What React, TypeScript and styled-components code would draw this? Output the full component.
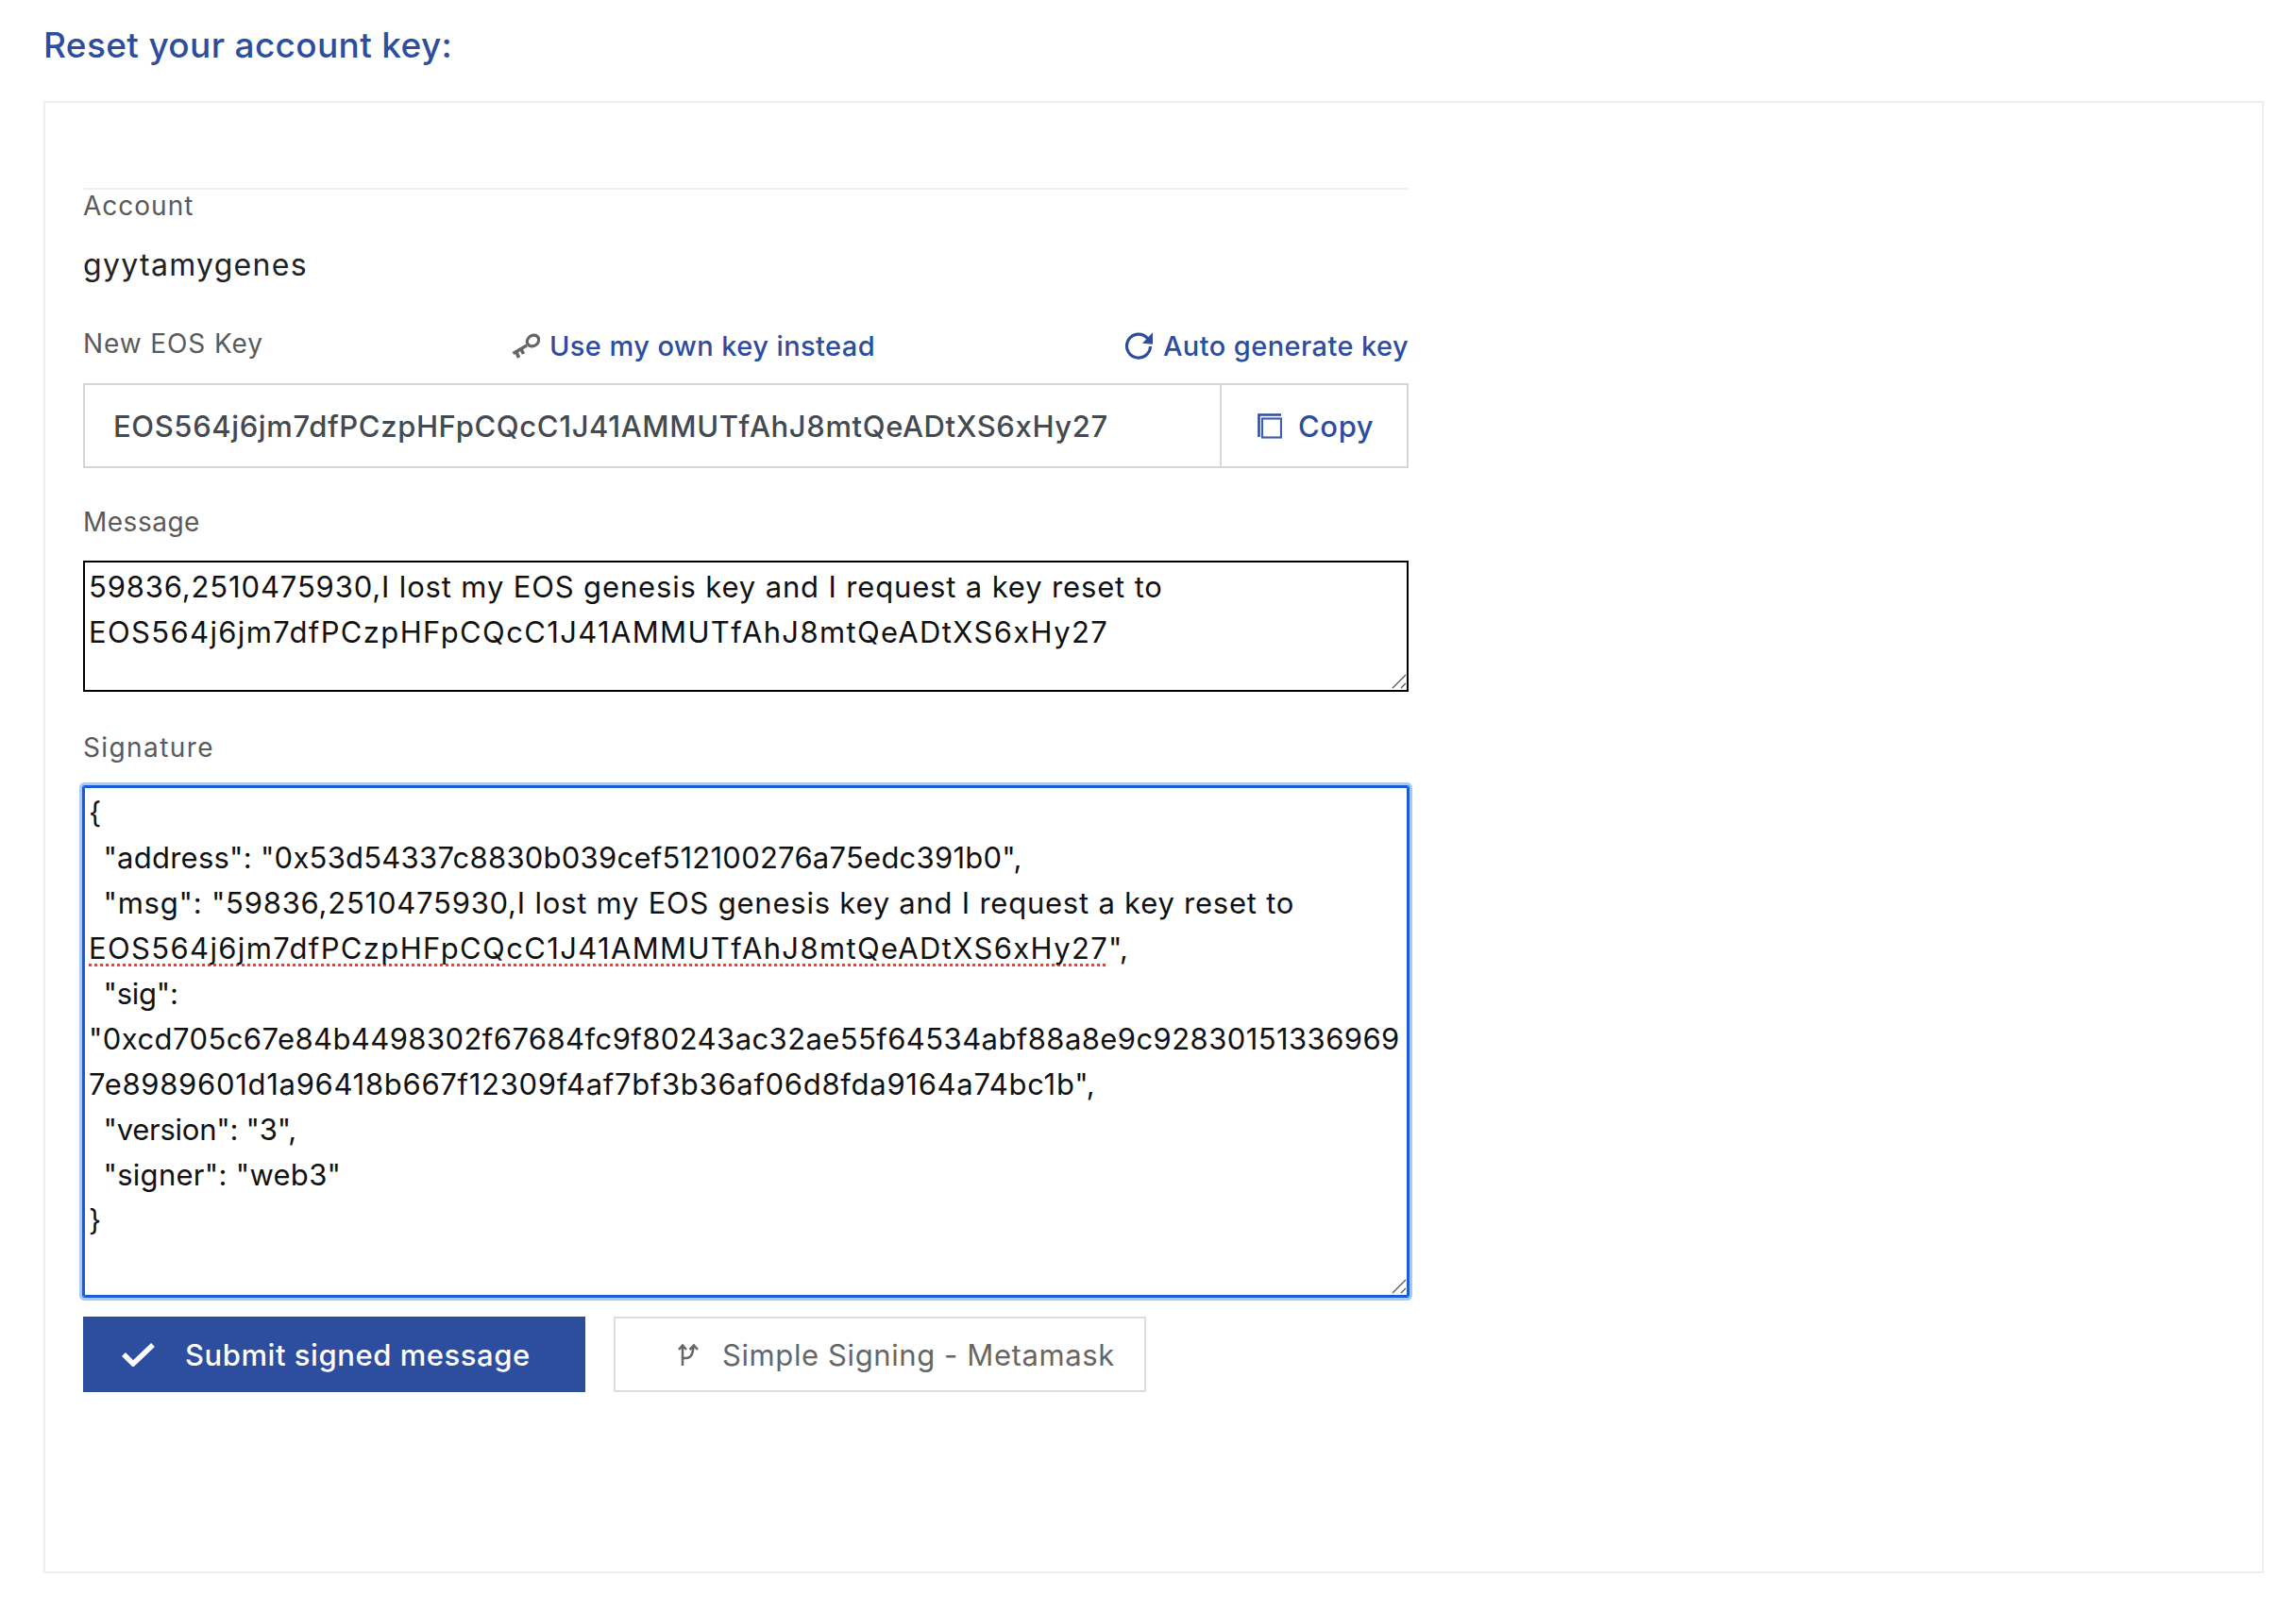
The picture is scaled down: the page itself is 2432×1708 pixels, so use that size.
import React from "react";
import styled, { createGlobalStyle } from "styled-components";

const Global = createGlobalStyle`
    html, body { margin: 0; padding: 0; background: #fff; }
    body { font-family: Inter, "Noto Sans", sans-serif; }
`;

const Page = styled.div`
    width: 2432px;
    height: 1708px;
    padding: 24px 34px 0 46px;
    box-sizing: border-box;
    overflow: hidden;
`;

const Title = styled.h1`
    margin: 0 0 24px;
    height: 59px;
    font-size: 37px;
    line-height: 47px;
    font-weight: 500;
    letter-spacing: 0.35px;
    color: #2d4e9e;
`;

const Card = styled.div`
    height: 1560px;
    box-sizing: border-box;
    border: 2px solid #eeeeee;
    padding: 90px 0 0 40px;
`;

const Form = styled.div`
    width: 1404px;
    border-top: 2px solid #f0f0f0;
`;

const Label = styled.div<{ $spacing?: number }>`
    font-size: 28px;
    line-height: 34px;
    letter-spacing: ${p => p.$spacing ?? 0.5}px;
    color: #5a5a5a;
`;

const AccountName = styled.div`
    margin-top: 24px;
    height: 78px;
    font-size: 32px;
    line-height: 44px;
    letter-spacing: 1.3px;
    color: #222;
`;

const KeyRow = styled.div`
    display: flex;
    align-items: center;
    height: 54px;
    margin-bottom: 15px;
`;

const LinkGroup = styled.a<{ $left: string }>`
    display: flex;
    align-items: center;
    gap: 10px;
    margin-left: ${p => p.$left};
    padding-top: 5px;
    font-size: 29px;
    letter-spacing: 0.42px;
    font-weight: 500;
    color: #2d4e9e;
`;

const KeyField = styled.div`
    display: flex;
    height: 90px;
    box-sizing: border-box;
    border: 2px solid #d5d5d5;
`;

const KeyValue = styled.div`
    flex: 1;
    display: flex;
    align-items: center;
    padding-left: 30px;
    font-size: 31px;
    letter-spacing: 0.62px;
    font-weight: 500;
    color: #454a50;
`;

const CopyButton = styled.div`
    width: 198px;
    box-sizing: border-box;
    border-left: 2px solid #d5d9e0;
    display: flex;
    align-items: center;
    gap: 17px;
    padding-left: 38px;
    font-size: 31px;
    font-weight: 500;
    letter-spacing: 0.6px;
    color: #2d4e9e;
`;

const FieldLabel = styled(Label) <{ $top: number }>`
    margin-top: ${p => p.$top}px;
    margin-bottom: 24px;
`;

const TextBox = styled.div<{ $height: number; $focus?: boolean }>`
    position: relative;
    height: ${p => p.$height}px;
    box-sizing: border-box;
    border: 2px solid ${p => (p.$focus ? "#1a5bd6" : "#000")};
    ${p => p.$focus && "border-radius: 2px; box-shadow: 0 0 0 1px #1a5bd6, 0 0 0 4px #a9c9f7;"}
    padding: 2px 0 0 4px;
    font-size: 31px;
    line-height: 48px;
    color: #111;
`;

const Line = styled.div<{ $spacing: number }>`
    white-space: pre;
    height: 48px;
    letter-spacing: ${p => p.$spacing}px;
`;

const Indent = styled.span`
    letter-spacing: -1px;
`;

const Misspelled = styled.span`
    text-decoration: underline dotted #e8403c 3px;
    text-decoration-skip-ink: none;
    text-underline-offset: 5px;
`;

const Trail = styled.span`
    letter-spacing: 0;
`;

const Grip = styled.svg`
    position: absolute;
    right: 0;
    bottom: 1px;
`;

const Actions = styled.div`
    display: flex;
    gap: 30px;
    margin-top: 21px;
`;

const PrimaryButton = styled.div`
    width: 532px;
    height: 80px;
    box-sizing: border-box;
    padding-left: 41px;
    display: flex;
    align-items: center;
    gap: 32px;
    background: #2d4e9e;
    color: #fff;
    font-size: 31px;
    letter-spacing: 0.55px;
    font-weight: 500;
`;

const SecondaryButton = styled.div`
    width: 564px;
    height: 80px;
    box-sizing: border-box;
    border: 2px solid #dedede;
    padding-left: 66px;
    display: flex;
    align-items: center;
    gap: 25px;
    color: #666;
    font-size: 31px;
    letter-spacing: 0.6px;
`;

const KEY = "EOS564j6jm7dfPCzpHFpCQcC1J41AMMUTfAhJ8mtQeADtXS6xHy27";

const KeyIcon = () => (
    <svg width="30" height="27" viewBox="0 0 30 27" fill="none" stroke="#666" strokeWidth="3.2">
        <ellipse cx="22.5" cy="8" rx="6.5" ry="5.5" transform="rotate(-35 22.5 8)" />
        <path d="M16 13 L1.5 21.5" />
        <path d="M5 20 L7.5 26 M10 17 L12.5 22" strokeWidth="3.6" />
    </svg>
);

const RefreshIcon = () => (
    <svg width="30" height="29" viewBox="0 0 30 29" fill="none">
        <path d="M23.5 6.5 A12.5 12.5 0 1 0 26.5 15" stroke="#2d4e9e" strokeWidth="3.2" />
        <path d="M29 0.3 V12.7 L18 11.7 Z" fill="#2d4e9e" />
    </svg>
);

const CopyIcon = () => (
    <svg width="26" height="27" viewBox="0 0 26 27" fill="none">
        <path d="M1.5 25 V1.5 H25" stroke="#2d4e9e" strokeWidth="2.6" />
        <rect x="5" y="5.5" width="20" height="20" stroke="#3f60ad" strokeWidth="2.2" />
    </svg>
);

const CheckIcon = () => (
    <svg width="35" height="26" viewBox="0 0 35 26" fill="none">
        <path d="M2 13 L12 23 L33 3" stroke="#fff" strokeWidth="5.5" />
    </svg>
);

const BranchIcon = () => (
    <svg width="22" height="23" viewBox="0 0 22 23" fill="none" stroke="#666" strokeWidth="2.5">
        <path d="M5 23 V2 M1 6 L5 1.5 L9 6" />
        <path d="M5 15 H9 Q16 15 16.5 2 M12.5 6 L17 1.5 L21 6" />
    </svg>
);

const GripIcon = () => (
    <Grip width="16" height="16" viewBox="0 0 16 16" stroke="#555" strokeWidth="1.2">
        <path d="M1 15 L15 1 M10 15 L15 10" />
    </Grip>
);

export default function App() {
    return (
        <Page>
            <Global />
            <Title>Reset your account key:</Title>
            <Card>
                <Form>
                    <Label $spacing={1}>Account</Label>
                    <AccountName>gyytamygenes</AccountName>
                    <KeyRow>
                        <Label $spacing={0.9}>New EOS Key</Label>
                        <LinkGroup $left="263px"><KeyIcon />Use my own key instead</LinkGroup>
                        <LinkGroup $left="auto"><RefreshIcon />Auto generate key</LinkGroup>
                    </KeyRow>
                    <KeyField>
                        <KeyValue>{KEY}</KeyValue>
                        <CopyButton><CopyIcon />Copy</CopyButton>
                    </KeyField>
                    <FieldLabel $top={40}>Message</FieldLabel>
                    <TextBox $height={139}>
                        <Line $spacing={0.85}>59836,2510475930,I lost my EOS genesis key and I request a key reset to</Line>
                        <Line $spacing={1.35}>{KEY}</Line>
                        <GripIcon />
                    </TextBox>
                    <FieldLabel $top={42} $spacing={1.4}>Signature</FieldLabel>
                    <TextBox $height={541} $focus>
                        <Line $spacing={0.6}>{"{"}</Line>
                        <Line $spacing={0.24}><Indent>{"  "}</Indent>{'"address": "0x53d54337c8830b039cef512100276a75edc391b0",'}</Line>
                        <Line $spacing={0.77}><Indent>{"  "}</Indent>{'"msg": "59836,2510475930,I lost my EOS genesis key and I request a key reset to'}</Line>
                        <Line $spacing={1.35}><Misspelled>{KEY}</Misspelled><Trail>",</Trail></Line>
                        <Line $spacing={-0.25}><Indent>{"  "}</Indent>{'"sig":'}</Line>
                        <Line $spacing={0.42}>"0xcd705c67e84b4498302f67684fc9f80243ac32ae55f64534abf88a8e9c92830151336969</Line>
                        <Line $spacing={0.7}>7e8989601d1a96418b667f12309f4af7bf3b36af06d8fda9164a74bc1b",</Line>
                        <Line $spacing={-0.25}><Indent>{"  "}</Indent>{'"version": "3",'}</Line>
                        <Line $spacing={0.28}><Indent>{"  "}</Indent>{'"signer": "web3"'}</Line>
                        <Line $spacing={0.6}>{"}"}</Line>
                        <GripIcon />
                    </TextBox>
                    <Actions>
                        <PrimaryButton><CheckIcon />Submit signed message</PrimaryButton>
                        <SecondaryButton><BranchIcon />Simple Signing - Metamask</SecondaryButton>
                    </Actions>
                </Form>
            </Card>
        </Page>
    );
}
